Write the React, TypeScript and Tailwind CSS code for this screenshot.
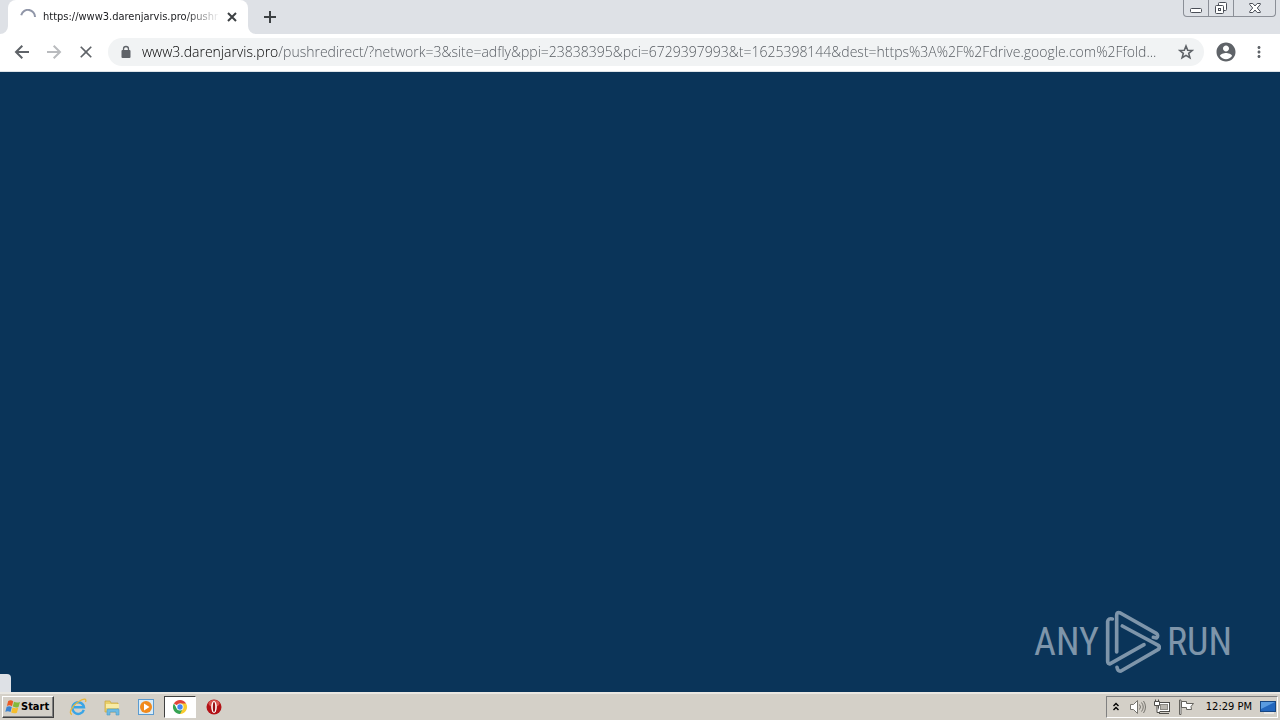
import { useState } from 'react';
import type { ReactNode } from 'react';
import { MdClose, MdMoreVert } from 'react-icons/md';

const PAGE_URL =
  'www3.darenjarvis.pro/pushredirect/?network=3&site=adfly&ppi=23838395&pci=6729397993&t=1625398144&dest=https%3A%2F%2Fdrive.google.com%2Ffold...';

function LineIcon({ size, width = 2, d }: { size: number; width?: number; d: string }) {
  return (
    <svg width={size} height={size} viewBox={`0 0 ${size} ${size}`} fill="none" stroke="currentColor" strokeWidth={width}>
      <path d={d} />
    </svg>
  );
}

function WindowControls() {
  return (
    <div className="mr-1 flex h-[17px] rounded-b-[4px] border border-t-0 border-[#8b8f97] bg-[#dee1e6]">
      <button aria-label="Minimize" className="flex w-[25px] items-end justify-center border-r border-[#8b8f97]">
        <svg width="12" height="16" viewBox="0 0 12 16" fill="#fff" stroke="#4a4e57">
          <rect x="0.5" y="8.5" width="11" height="4" rx="1" />
        </svg>
      </button>
      <button aria-label="Restore" className="flex w-[25px] items-end justify-center border-r border-[#8b8f97]">
        <svg width="14" height="16" viewBox="0 0 14 16" fill="#fff" stroke="#4a4e57">
          <rect x="4.5" y="2.5" width="8" height="8" rx="1" />
          <rect x="1.5" y="5.5" width="8" height="8" rx="1" />
          <rect x="4.5" y="8.5" width="2" height="2" />
        </svg>
      </button>
      <button aria-label="Close" className="flex w-[41px] items-end justify-center">
        <svg width="12" height="16" viewBox="0 0 12 16" fill="#fff" stroke="#4a4e57">
          <path d="M.7 3.5h3.1L6 6l2.2-2.5h3.1v1L8.3 8l3 3.5v1H8.2L6 10l-2.2 2.5H.7v-1l3-3.5-3-3.5z" />
        </svg>
      </button>
    </div>
  );
}

function TabStrip() {
  return (
    <div className="flex h-[34px] items-start justify-between bg-[#dee1e6]">
      <div className="flex h-full items-center">
        <div className="flex h-full items-end">
          <svg width="8" height="8" viewBox="0 0 8 8" fill="#fff">
            <path d="M8 0v8H0a8 8 0 0 0 8-8z" />
          </svg>
        </div>
        <div className="flex h-full w-60 items-center rounded-t-lg bg-white pr-2 pl-3">
          <svg width="16" height="16" viewBox="0 0 16 16" fill="none" stroke="#9096a8" strokeWidth="2">
            <path d="M1.2 6.2A7 7 0 0 1 15 8" />
          </svg>
          <span className="ml-[7px] flex-1 text-[11px] leading-4 whitespace-nowrap text-[#202124] [mask-image:linear-gradient(to_right,#000_80%,transparent)]">
            https://www3.darenjarvis.pro/pushr
          </span>
          <button aria-label="Close tab" className="ml-1 text-[#3c4043]">
            <LineIcon size={16} d="M4 4l8 8M12 4l-8 8" />
          </button>
        </div>
        <div className="flex h-full items-end">
          <svg width="8" height="8" viewBox="0 0 8 8" fill="#fff">
            <path d="M0 0v8h8a8 8 0 0 1-8-8z" />
          </svg>
        </div>
        <button aria-label="New tab" className="ml-1 text-[#3c4043]">
          <LineIcon size={20} d="M10 4v12M4 10h12" />
        </button>
      </div>
      <WindowControls />
    </div>
  );
}

function Toolbar() {
  const [url, setUrl] = useState(PAGE_URL);

  return (
    <div className="flex items-center border-b border-[#dde3e8] bg-white px-3 pt-1 pb-[5px] text-[#5f6368]">
      <button aria-label="Back" className="mr-3">
        <LineIcon size={20} d="M17 10H4.500M10.300 3.700L4 10l6.300 6.300" />
      </button>
      <button aria-label="Forward" className="mr-3 text-[#b9bbbe]">
        <LineIcon size={20} d="M3 10h12.500M9.700 3.700L16 10l-6.300 6.300" />
      </button>
      <button aria-label="Stop loading" className="mr-3">
        <MdClose size={20} />
      </button>
      <div className="flex h-7 min-w-0 flex-1 items-center rounded-full bg-[#f1f3f4] pr-2.5 pl-3">
        <svg width="12" height="14" viewBox="0 0 12 14">
          <rect x="1.5" y="5" width="9" height="8" rx="1" fill="#5f6368" />
          <path d="M3.500 5.500V4a2.500 2.500 0 0 1 5 0v1.500" fill="none" stroke="#5f6368" strokeWidth="1.3" />
        </svg>
        <input
          type="text"
          aria-label="Address"
          value={url}
          onChange={(e) => setUrl(e.target.value)}
          className="ml-2.5 h-6 min-w-0 flex-1 bg-[linear-gradient(to_right,#000_136px,#50555b_136px)] bg-clip-text pb-0.5 font-['Open_Sans',sans-serif] text-[14px] font-light text-transparent outline-none"
        />
        <button aria-label="Bookmark this page" className="ml-2">
          <LineIcon
            size={16}
            width={1.6}
            d="M8 2l1.700 4.200 4.500.3-3.500 2.900 1.200 4.400L8 11.400l-3.900 2.400 1.200-4.400L1.800 6.500l4.500-.3z"
          />
        </button>
      </div>
      <button aria-label="Profile" className="ml-2.5">
        <svg width="24" height="24" viewBox="0 0 24 24" fill="currentColor">
          <path d="M12 2.500C6.750 2.500 2.500 6.750 2.500 12s4.250 9.500 9.500 9.500 9.500-4.250 9.500-9.500S17.250 2.500 12 2.500zm0 3c1.660 0 3 1.340 3 3s-1.340 3-3 3-3-1.340-3-3 1.340-3 3-3zm0 13.700c-2.500 0-4.710-1.280-6-3.220.03-1.990 4-3.080 6-3.080 1.990 0 5.970 1.090 6 3.080-1.290 1.940-3.500 3.220-6 3.220z" />
        </svg>
      </button>
      <button aria-label="Menu" className="ml-3">
        <MdMoreVert size={18} />
      </button>
    </div>
  );
}

function AnyRunMark() {
  return (
    <div className="flex items-center gap-1.5 font-['Roboto_Condensed','Open_Sans',sans-serif] text-[38px] leading-none text-[#7e95aa]">
      <span>ANY</span>
      <svg
        width="56"
        height="64"
        viewBox="16 16 168 192"
        fill="none"
        stroke="currentColor"
        strokeWidth="11"
        strokeLinejoin="round"
        strokeLinecap="round"
      >
        <path d="M51 142V32q0-12 11-7l108 61q8 7 0 14l-9-2" />
        <path d="M68 64l108 58q6 6 0 12L64 199q-10 2-12-11" />
        <path d="M133 120L32 177q-8 2-8-7V50q2-10 14-7" />
      </svg>
      <span>RUN</span>
    </div>
  );
}

function ExplorerIcon() {
  return (
    <svg width="18" height="18" viewBox="0 0 18 18" fill="none">
      <path d="M14.800 11.800A5.800 5.800 0 1 1 15 9.300H5" stroke="#3aa5e6" strokeWidth="2.4" />
      <path d="M3 16.500C-1 15.500 3 8 9 4s9-3.500 7.500 0" stroke="#e8b73a" strokeWidth="1.3" />
    </svg>
  );
}

function FolderIcon() {
  return (
    <svg width="18" height="18" viewBox="0 0 18 18">
      <path d="M2 3h5l1 2h7v9H2z" fill="#e9cf6a" stroke="#c9a53c" strokeWidth=".7" />
      <path d="M3 6h13v4H3z" fill="#f8eba5" />
      <path d="M4 17v-5q0-1 1-1h10q1 0 1 1v5h-3v-3H7v3z" fill="#6dbbe3" stroke="#4c9ac8" strokeWidth=".6" />
    </svg>
  );
}

function PlayerIcon() {
  return (
    <svg width="18" height="18" viewBox="0 0 18 18">
      <rect x="1.5" y="1.5" width="15" height="15" fill="#d9ecf8" stroke="#5b9bd0" />
      <circle cx="9" cy="9" r="6" fill="#f18a1c" />
      <path d="M7 5.500v7L12.500 9z" fill="#fff" />
    </svg>
  );
}

function ChromeIcon() {
  return (
    <svg width="16" height="16" viewBox="0 0 16 16">
      <path d="M8 8L1.900 4.500A7 7 0 0 1 14.100 4.500z" fill="#e0443a" />
      <path d="M8 8V4.500h6.100A7 7 0 0 1 8 15z" fill="#f9cb2f" />
      <path d="M8 8l3 1.500L8 15A7 7 0 0 1 1.900 4.500L5 9.700z" fill="#36a352" />
      <circle cx="8" cy="8" r="3.5" fill="#fff" />
      <circle cx="8" cy="8" r="2.7" fill="#4286f3" />
    </svg>
  );
}

function OperaIcon() {
  return (
    <svg width="16" height="16" viewBox="0 0 16 16">
      <circle cx="8" cy="8" r="7.5" fill="#b31217" />
      <ellipse cx="8" cy="4.5" rx="5.5" ry="3.5" fill="#d9534f" />
      <ellipse cx="8" cy="8" rx="2.8" ry="6" fill="#fff" />
      <ellipse cx="8" cy="8" rx="1.2" ry="5" fill="#9a1015" />
    </svg>
  );
}

function WindowsFlag() {
  return (
    <svg width="16" height="16" viewBox="0 0 16 16">
      <path d="M3.200 2q2.600-1.500 5 .2L7 7.200Q4.500 5.600 1.900 7z" fill="#ea5a24" />
      <path d="M9 2.700q2.600 1.500 6 .2l-1.500 5q-3 1.200-5.700-.3z" fill="#83b93b" />
      <path d="M1.700 7.800q2.600-1.300 5.100.2L5.500 13Q3 11.500.3 12.800z" fill="#3b83d1" />
      <path d="M7.500 8.500q2.800 1.400 5.800.3l-1.400 5q-3 1.200-5.700-.3z" fill="#f5bd2c" />
    </svg>
  );
}

function TaskButton({ label, active, children }: { label: string; active?: boolean; children: ReactNode }) {
  return (
    <button
      aria-label={label}
      className={
        active
          ? 'flex h-[22px] w-8 items-center justify-center border border-t-[#404040] border-r-white border-b-white border-l-[#404040] bg-white'
          : 'flex h-[22px] w-8 items-center justify-center'
      }
    >
      {children}
    </button>
  );
}

function Tray() {
  return (
    <div className="flex h-[22px] items-center border border-t-[#808080] border-r-white border-b-white border-l-[#808080] pr-px pl-1.5">
      <button aria-label="Show hidden icons">
        <svg width="6" height="10" viewBox="0 0 6 10" fill="none" stroke="#000" strokeWidth="1.4">
          <path d="M.5 4L3 1.500 5.500 4M.5 8L3 5.500 5.500 8" />
        </svg>
      </button>
      <button aria-label="Volume" className="ml-2.5">
        <svg width="17" height="16" viewBox="0 0 17 16" fill="none" stroke="#77756f">
          <path d="M1.500 5.500h3l4-4v13l-4-4h-3z" fill="#fff" />
          <path d="M10.500 5.500q2 2.500 0 5M12.500 3.500q3.500 4.500 0 9M14.500 2q4 6 0 12" />
        </svg>
      </button>
      <button aria-label="Network" className="ml-2">
        <svg width="16" height="16" viewBox="0 0 16 16" fill="#fff" stroke="#4e4d49">
          <rect x="4.5" y="3.5" width="11" height="9" />
          <rect x="6.5" y="5.5" width="7" height="5" fill="#b9b6af" stroke="#8b8983" />
          <path d="M5 14.500h10" />
          <path d="M.5 2.500h5v4h-5zM1.500 .5v2M4.500 .5v2M3 6.500v7h3" />
        </svg>
      </button>
      <button aria-label="Action Center" className="ml-2">
        <svg width="16" height="16" viewBox="0 0 16 16" fill="#fff" stroke="#65635e">
          <path d="M3.500 2.500h5v2h7l-2.500 3 .5 3h-5v-2h-5z" />
          <path d="M1.500 1v14.500h1.500V1z" />
        </svg>
      </button>
      <span className="ml-3 text-[11px] leading-4 text-black">12:29 PM</span>
      <button aria-label="Show desktop" className="ml-2">
        <svg width="16" height="14" viewBox="0 0 16 14">
          <rect x=".5" y="1.5" width="15" height="10" fill="#2467bd" stroke="#174682" />
          <path d="M1 2h14L1 9z" fill="#5a9be0" />
          <path d="M4 13h10" stroke="#eee" strokeWidth="1.5" />
        </svg>
      </button>
    </div>
  );
}

function Taskbar() {
  return (
    <footer className="flex h-7 items-center justify-between border-t-2 border-[#e9e7e2] bg-[#d4d0c8] px-0.5">
      <div className="flex items-center">
        <button className="mr-2 flex h-[22px] items-center border border-t-white border-r-[#404040] border-b-[#404040] border-l-white pr-1 pl-0.5 text-[11px] font-bold text-black shadow-[inset_-1px_-1px_#808080]">
          <WindowsFlag />
          <span>Start</span>
        </button>
        <div className="flex items-center gap-0.5">
          <TaskButton label="Internet Explorer">
            <ExplorerIcon />
          </TaskButton>
          <TaskButton label="Windows Explorer">
            <FolderIcon />
          </TaskButton>
          <TaskButton label="Media Player">
            <PlayerIcon />
          </TaskButton>
          <TaskButton label="Google Chrome" active>
            <ChromeIcon />
          </TaskButton>
          <TaskButton label="Opera">
            <OperaIcon />
          </TaskButton>
        </div>
      </div>
      <Tray />
    </footer>
  );
}

export default function App() {
  return (
    <div className="flex min-h-screen flex-col font-['DejaVu_Sans_Condensed','Noto_Sans',sans-serif]">
      <TabStrip />
      <Toolbar />
      <main className="flex flex-1 items-end justify-between bg-[#0a3459]">
        <div className="h-[18px] w-[11px] rounded-tr-[4px] bg-[#dee1e6]" />
        <div className="mr-12 mb-[18px]">
          <AnyRunMark />
        </div>
      </main>
      <Taskbar />
    </div>
  );
}
